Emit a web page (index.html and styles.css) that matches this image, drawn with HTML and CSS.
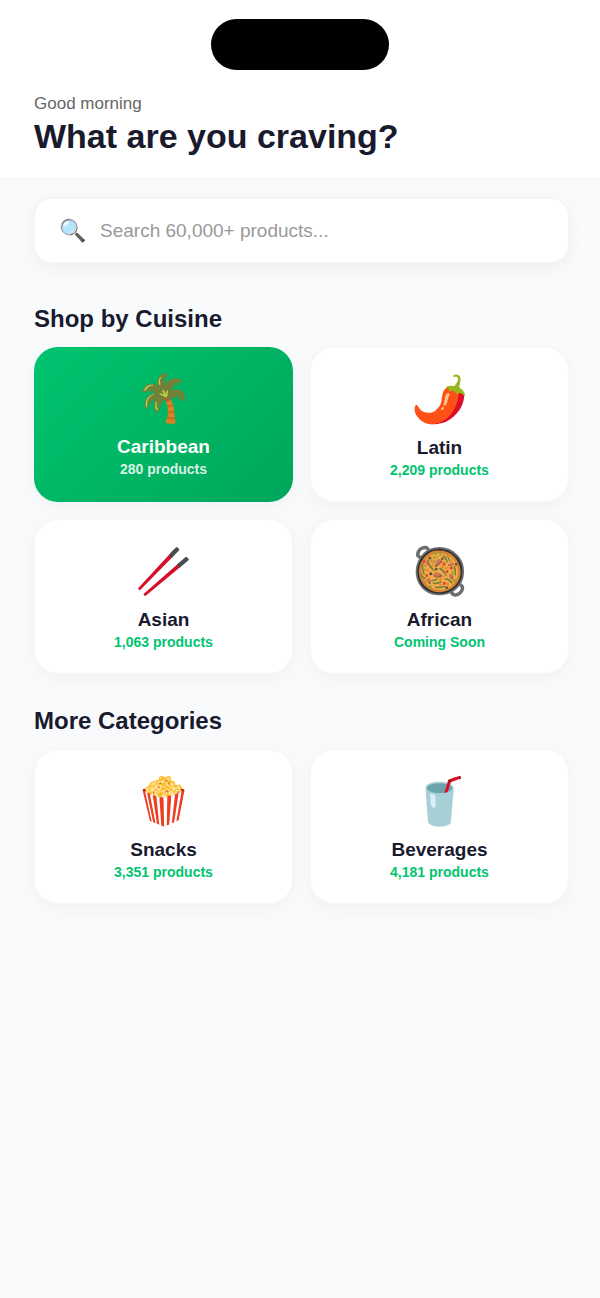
FILE: index.html
```
<!DOCTYPE html>
<html lang="en">

<head>
    <meta charset="UTF-8">
    <meta name="viewport" content="width=device-width, initial-scale=1.0">
    <title>Shop</title>
    <link rel="stylesheet" href="styles.css">
</head>

<body>
    <header class="header">
        <div class="island"></div>
        <p class="greeting">Good morning</p>
        <h1>What are you craving?</h1>
    </header>

    <main class="content">
        <label class="search">
            <span class="search-icon">🔍</span>
            <input type="text" placeholder="Search 60,000+ products..." aria-label="Search products">
        </label>

        <section class="cuisines">
            <h2>Shop by Cuisine</h2>
            <div class="grid">
                <button class="card active">
                    <span class="icon">🌴</span>
                    <span class="name">Caribbean</span>
                    <span class="count">280 products</span>
                </button>
                <button class="card">
                    <span class="icon">🌶️</span>
                    <span class="name">Latin</span>
                    <span class="count">2,209 products</span>
                </button>
                <button class="card">
                    <span class="icon">🥢</span>
                    <span class="name">Asian</span>
                    <span class="count">1,063 products</span>
                </button>
                <button class="card">
                    <span class="icon">🥘</span>
                    <span class="name">African</span>
                    <span class="count">Coming Soon</span>
                </button>
            </div>
        </section>

        <section class="categories">
            <h2>More Categories</h2>
            <div class="grid">
                <button class="card">
                    <span class="icon">🍿</span>
                    <span class="name">Snacks</span>
                    <span class="count">3,351 products</span>
                </button>
                <button class="card">
                    <span class="icon">🥤</span>
                    <span class="name">Beverages</span>
                    <span class="count">4,181 products</span>
                </button>
            </div>
        </section>
    </main>
</body>

</html>
```

FILE: styles.css
```
* {
    box-sizing: border-box;
    margin: 0;
    padding: 0;
}

body {
    font-family: "Liberation Sans", Arial, sans-serif;
    background: #f8fafc;
    color: #1a1a2e;
}

.header {
    background: white;
    padding: 19px 34px 20px;
    box-shadow: 0 1px 3px rgba(0, 0, 0, 0.02);
}

.island {
    width: 178px;
    height: 51px;
    margin: 0 auto 24px;
    border-radius: 26px;
    background: black;
}

.greeting {
    font-size: 17px;
    line-height: 20px;
    color: #666;
}

h1 {
    font-size: 34px;
    line-height: 44px;
}

.content {
    padding: 20px 31px 32px 34px;
}

.search {
    display: flex;
    align-items: center;
    gap: 14px;
    height: 65px;
    padding: 0 24px;
    background: white;
    border: 1px solid #f3f5f7;
    border-radius: 18px;
    box-shadow: 0 4px 18px rgba(0, 0, 0, 0.05);
}

.search-icon {
    font-size: 22px;
}

.search input {
    flex: 1;
    min-width: 0;
    border: none;
    outline: none;
    background: none;
    font-family: inherit;
    font-size: 19px;
    color: #1a1a2e;
}

.search input::placeholder {
    color: #999;
}

h2 {
    font-size: 24px;
    line-height: 28px;
    margin-bottom: 14px;
}

.cuisines {
    margin-top: 42px;
}

.categories {
    margin-top: 33px;
}

.grid {
    display: grid;
    grid-template-columns: 1fr 1fr;
    gap: 17px;
}

.card {
    display: flex;
    flex-direction: column;
    align-items: center;
    padding: 23px 16px 20px;
    border: 1px solid #f5f7f9;
    border-radius: 24px;
    background: white;
    box-shadow: 0 4px 18px rgba(0, 0, 0, 0.04);
    font-family: inherit;
    font-weight: bold;
    color: #1a1a2e;
    cursor: pointer;
}

.icon {
    font-size: 46px;
    line-height: 56px;
    margin-bottom: 10px;
}

.name {
    font-size: 19px;
    line-height: 22px;
}

.count {
    font-size: 14px;
    line-height: 22px;
    color: #00c470;
}

.active {
    border: none;
    background: linear-gradient(135deg, #00c46f, #00a65a);
    color: white;
}

.active .count {
    color: rgba(255, 255, 255, 0.85);
}
```
